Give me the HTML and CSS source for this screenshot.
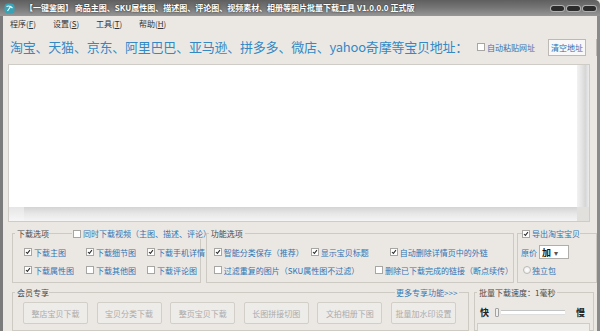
FILE: index.html
```html
<!DOCTYPE html>
<html lang="zh-CN">
<head>
<meta charset="utf-8">
<title>一键鉴图</title>
<link rel="stylesheet" href="styles.css">
</head>
<body>
<div class="win">
  <div class="titlebar">
    <svg class="app-icon" viewBox="0 0 11 11"><rect x="0.5" y="0.5" width="10" height="10" rx="3.5" fill="#39a3b6"/><path d="M2.5 3.5 Q5.5 2 8.5 5 M3.5 8 L7 3" stroke="#e8fbff" stroke-width="1.2" fill="none"/></svg>
    <span class="title">【一键鉴图】 商品主图、SKU属性图、描述图、评论图、视频素材、相册等图片批量下载工具 V1.0.0.0 正式版</span>
    <div class="winbtns"><span class="wb"></span><span class="wb"></span><span class="wb"></span></div>
  </div>
  <div class="client">
    <nav class="menubar">
      <span class="menu">程序(<u>F</u>)</span>
      <span class="menu">设置(<u>S</u>)</span>
      <span class="menu">工具(<u>T</u>)</span>
      <span class="menu">帮助(<u>H</u>)</span>
    </nav>
    <div class="urlrow">
      <span class="urllabel">淘宝、天猫、京东、阿里巴巴、亚马逊、拼多多、微店、yahoo奇摩等宝贝地址：</span>
      <label class="chk url-chk"><span class="box"></span>自动粘贴网址</label>
      <button class="btn-clear">清空地址</button>
      <button class="btn-clear btn-cut"></button>
    </div>
    <div class="editor">
      <div class="editor-main"><div class="text-area"></div><div class="vscroll"></div></div>
      <div class="hscroll"><div class="hs-btn"></div><div class="hs-track"></div><div class="corner"></div></div>
    </div>
    <div class="opts">
      <fieldset class="grp grp-dl">
        <legend><span>下载选项</span><span class="gline w-dl"></span><label class="chk lg-chk"><span class="box"></span>同时下载视频（主图、描述、评论）</label></legend>
        <div class="dl-grid">
          <label class="chk"><span class="box on"><svg viewBox="0 0 8 8"><path d="M1.3 4 L3.2 5.9 L6.6 1.6"/></svg></span>下载主图</label>
          <label class="chk"><span class="box on"><svg viewBox="0 0 8 8"><path d="M1.3 4 L3.2 5.9 L6.6 1.6"/></svg></span>下载细节图</label>
          <label class="chk"><span class="box on"><svg viewBox="0 0 8 8"><path d="M1.3 4 L3.2 5.9 L6.6 1.6"/></svg></span>下载手机详情</label>
          <label class="chk"><span class="box on"><svg viewBox="0 0 8 8"><path d="M1.3 4 L3.2 5.9 L6.6 1.6"/></svg></span>下载属性图</label>
          <label class="chk"><span class="box"></span>下载其他图</label>
          <label class="chk"><span class="box"></span>下载评论图</label>
        </div>
      </fieldset>
      <fieldset class="grp grp-fn">
        <legend><span>功能选项</span></legend>
        <div class="fn-row">
          <label class="chk w97"><span class="box on"><svg viewBox="0 0 8 8"><path d="M1.3 4 L3.2 5.9 L6.6 1.6"/></svg></span>智能分类保存（推荐）</label>
          <label class="chk w79"><span class="box on"><svg viewBox="0 0 8 8"><path d="M1.3 4 L3.2 5.9 L6.6 1.6"/></svg></span>显示宝贝标题</label>
          <label class="chk"><span class="box on"><svg viewBox="0 0 8 8"><path d="M1.3 4 L3.2 5.9 L6.6 1.6"/></svg></span>自动删除详情页中的外链</label>
        </div>
        <div class="fn-row">
          <label class="chk w173"><span class="box"></span>过滤重复的图片（SKU属性图不过滤）</label>
          <label class="chk"><span class="box"></span>删除已下载完成的链接（断点续传）</label>
        </div>
      </fieldset>
      <fieldset class="grp grp-ex">
        <legend><label class="chk"><span class="box on"><svg viewBox="0 0 8 8"><path d="M1.3 4 L3.2 5.9 L6.6 1.6"/></svg></span>导出淘宝宝贝</label></legend>
        <div class="ex-row">
          <span class="blue">原价</span>
          <span class="select"><b>加</b><span class="arrow">▾</span></span>
        </div>
        <div class="ex-row">
          <label class="chk rad"><span class="radio"></span>独立包</label>
        </div>
      </fieldset>
    </div>
    <div class="bottom">
      <fieldset class="grp grp-vip">
        <legend><span>会员专享</span><span class="gline w-vip"></span><span class="more">更多专享功能&gt;&gt;&gt;</span></legend>
        <div class="btns">
          <button class="btn-d" disabled>整店宝贝下载</button>
          <button class="btn-d" disabled>宝贝分类下载</button>
          <button class="btn-d" disabled>整页宝贝下载</button>
          <button class="btn-d" disabled>长图拼接切图</button>
          <button class="btn-d" disabled>文拍相册下图</button>
          <button class="btn-d" disabled>批量加水印设置</button>
        </div>
      </fieldset>
      <fieldset class="grp grp-speed">
        <legend><span>批量下载速度：1毫秒</span></legend>
        <div class="speed-row">
          <span class="sp">快</span>
          <div class="slider"><span class="thumb"></span><span class="track"></span></div>
          <span class="sp slow">慢</span>
        </div>
        <div class="speed-box"></div>
      </fieldset>
    </div>
  </div>
</div>
</body>
</html>
```
FILE: styles.css
```css
* { box-sizing: border-box; }
html, body { margin: 0; padding: 0; }
body {
  width: 600px; height: 331px; overflow: hidden;
  background: #ebe8e4;
  font-family: "Noto Sans CJK SC", "Noto Sans", sans-serif;
  font-size: 8px; color: #333;
}
.win { width: 600px; height: 331px; display: flex; flex-direction: column; overflow: hidden; }

.titlebar {
  height: 16px; flex: none; display: flex; align-items: center;
  background: linear-gradient(#5f5f5f, #747474 45%, #979797);
  border-top-right-radius: 5px; padding-left: 4px;
}
.app-icon { width: 11px; height: 11px; flex: none; }
.title {
  margin-left: 10px; color: #fff; font-weight: bold; font-size: 8px;
  line-height: 16px; white-space: nowrap; text-shadow: 0 0 2px #222;
}
.winbtns { margin-left: auto; display: flex; gap: 3px; padding-right: 4px; }
.wb { width: 13px; height: 5px; border-radius: 3px; background: #2b2b2b; box-shadow: 0 0 0 1px #b0b0b0; }

.client {
  flex: 1; min-height: 0; display: flex; flex-direction: column;
  border-left: 3px solid #7b7b7b; border-right: 3px solid #8a8a8a; overflow: hidden;
}

.menubar { height: 15px; flex: none; display: flex; align-items: center; padding-left: 7px; }
.menu { width: 43px; color: #333; line-height: 15px; white-space: nowrap; }
.menu u { text-decoration: underline; }

.urlrow { height: 32px; flex: none; display: flex; align-items: center; padding-left: 7px; white-space: nowrap; }
.urllabel { font-size: 13px; line-height: 16px; color: #3289c4; letter-spacing: -0.22px; }
.url-chk { margin-left: 9px; color: #3f90cf; }
.btn-clear {
  margin: 0 0 0 13px; padding: 0; width: 38px; height: 17px; flex: none;
  font: inherit; font-size: 8px; color: #2a6fb0;
  background: #f8f8f8; border: 1px solid #bdbab5;
}
.btn-cut { margin-left: 10px; }

.editor {
  flex: none; height: 158px; margin: 1px 7px 0 5px;
  border: 1px solid #cfccc7; display: flex; flex-direction: column;
}
.editor-main { flex: 1; display: flex; min-height: 0; }
.text-area { flex: 1; background: #fff; }
.vscroll { width: 12px; background: linear-gradient(to right, #f2f2f2, #e4e4e4 40%, #d6d6d6 70%, #ececec); }
.hscroll { height: 14px; flex: none; display: flex; }
.hs-btn { width: 15px; background: linear-gradient(#e6e6e6, #f6f6f6); }
.hs-track { flex: 1; background: linear-gradient(#d4d4d4, #e8e8e8 50%, #f4f4f4); }
.corner { width: 12px; background: #e2e0dc; }

.chk { display: flex; align-items: center; white-space: nowrap; color: #2f74b4; line-height: 11px; }
.box {
  width: 8px; height: 8px; flex: none; margin-right: 2px;
  border: 1px solid #a8a6a2; background: #fff; display: flex;
}
.box svg { width: 6px; height: 6px; }
.box svg path { fill: none; stroke: #2c2c2c; stroke-width: 1.4; }

.opts { flex: none; display: flex; margin-top: 6px; padding-left: 9px; height: 55px; }
.grp { margin: 0; padding: 0; border: 1px solid #cdcac4; min-width: 0; }
.grp > legend {
  margin-left: 2px; padding: 0 2px; height: 11px; line-height: 11px;
  display: flex; align-items: center; color: #4a4a4a; white-space: nowrap;
}
.gline { display: block; height: 1px; background: #cdcac4; flex: none; }
.w-dl { width: 23px; }
.lg-chk { margin-left: 1px; }

.grp-dl { width: 202px; }
.dl-grid {
  padding: 4px 0 0 11px; display: grid;
  grid-template-columns: 62px 61px auto; grid-auto-rows: 18px; align-items: center;
}

.grp-fn { width: 330px; margin-left: 5px; }
.fn-row { display: flex; align-items: center; height: 18px; padding-left: 7px; }
.fn-row:first-of-type { margin-top: 4px; }
.w97 { width: 97px; }
.w79 { width: 79px; }
.w173 { width: 173px; }

.grp-ex { width: 80px; margin-left: 3px; flex: none; }
.grp-ex > legend { margin-left: 4px; padding: 0; }
.ex-row { display: flex; align-items: center; height: 18px; padding-left: 3px; }
.ex-row:first-of-type { margin-top: 4px; }
.blue { color: #2f74b4; }
.select {
  margin-left: 2px; width: 30px; height: 14px; background: #fff;
  border: 1px solid #b0aeaa; display: flex; align-items: center; padding-left: 2px;
}
.select b { font-size: 9px; color: #111; }
.arrow { margin-left: 3px; color: #555; font-size: 8px; }
.rad { margin-left: 2px; }
.radio {
  width: 8px; height: 8px; border-radius: 50%; margin-right: 1px; flex: none;
  border: 1px solid #bcbab6; background: radial-gradient(#fff, #e9e9e9);
}

.bottom { flex: 1; min-height: 0; display: flex; margin-top: 4px; padding-left: 9px; }
.grp-vip { width: 457px; flex: none; }
.w-vip { width: 346px; }
.more { color: #2f78b7; padding-left: 1px; }
.btns { display: flex; gap: 8.6px; padding: 4px 0 5px 10px; }
.btn-d {
  width: 65px; height: 22px; padding: 0; margin: 0;
  font: inherit; font-size: 8px; color: #ababab;
  background: #eeece9; border: 1px solid #d2cec8; border-radius: 2px;
}
.grp-speed { width: 120px; margin-left: 5px; flex: none; }
.speed-row { display: flex; align-items: center; height: 14px; margin-top: 7px; padding-left: 5px; }
.sp { font-size: 9px; font-weight: bold; color: #222; }
.slider { width: 70px; margin-left: 6px; display: flex; align-items: center; }
.thumb { width: 4px; height: 9px; border: 1px solid #a2a2a2; border-radius: 1px; background: #eee; flex: none; }
.track { flex: 1; height: 4px; margin-left: 2px; background: #fff; border-top: 1px solid #c4c4c4; box-shadow: 0 1px 1px #ddd; }
.slow { margin-left: 11px; }
.speed-box { height: 20px; margin: 4px 3px 0 2px; border: 1px solid #cfcbc5; background: #efedea; }
```
